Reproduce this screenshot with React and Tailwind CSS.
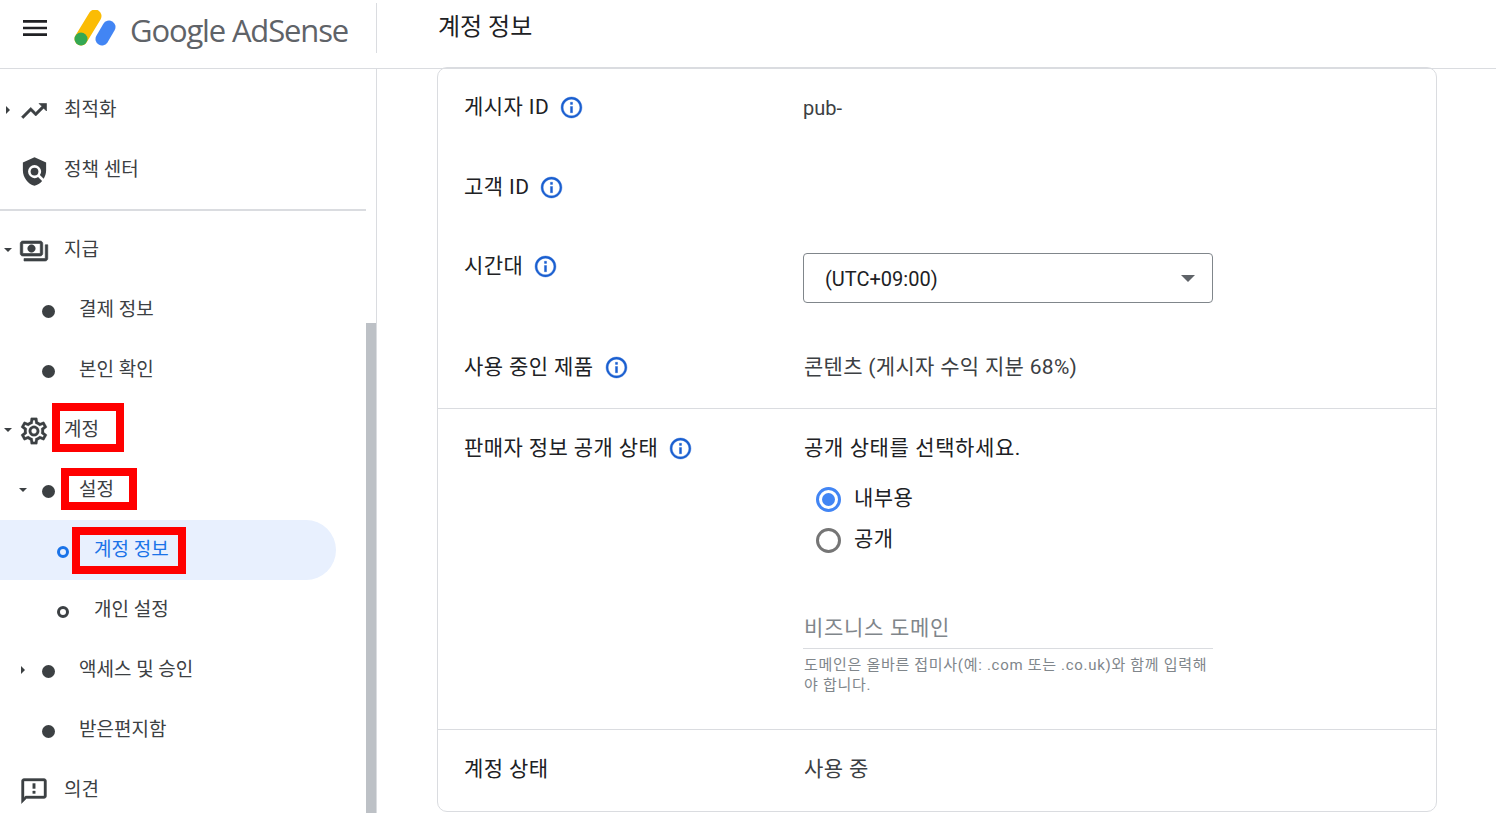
import React from 'react';
import { MdMenu, MdPolicy } from 'react-icons/md';

const fontStack = "font-['Roboto','Noto_Sans_CJK_KR',sans-serif]";
const iconClass = 'mt-[2px] mr-[15px] ml-[5px] shrink-0 text-[#3c4043]';

const paths = {
    trending: 'M16 6l2.29 2.29-4.88 4.88-4-4L2 16.59 3.41 18l6-6 4 4 6.3-6.29L22 12V6z',
    payments: 'M19 14V6c0-1.1-.9-2-2-2H3c-1.1 0-2 .9-2 2v8c0 1.1.9 2 2 2h14c1.1 0 2-.9 2-2zm-2 0H3V6h14v8zm-7-7c-1.66 0-3 1.34-3 3s1.34 3 3 3 3-1.34 3-3-1.34-3-3-3zm13 0v11c0 1.1-.9 2-2 2H4v-2h17V7h2z',
    settings: 'M19.43 12.98c.04-.32.07-.64.07-.98 0-.34-.03-.66-.07-.98l2.11-1.65c.19-.15.24-.42.12-.64l-2-3.46c-.09-.16-.26-.25-.44-.25-.06 0-.12.01-.17.03l-2.49 1c-.52-.4-1.08-.73-1.69-.98l-.38-2.65C14.46 2.18 14.25 2 14 2h-4c-.25 0-.46.18-.49.42l-.38 2.65c-.61.25-1.17.59-1.69.98l-2.49-1c-.06-.02-.12-.03-.18-.03-.17 0-.34.09-.43.25l-2 3.46c-.13.22-.07.49.12.64l2.11 1.65c-.04.32-.07.65-.07.98 0 .33.03.66.07.98l-2.11 1.65c-.19.15-.24.42-.12.64l2 3.46c.09.16.26.25.44.25.06 0 .12-.01.17-.03l2.49-1c.52.4 1.08.73 1.69.98l.38 2.65c.03.24.24.42.49.42h4c.25 0 .46-.18.49-.42l.38-2.65c.61-.25 1.17-.59 1.69-.98l2.49 1c.06.02.12.03.18.03.17 0 .34-.09.43-.25l2-3.46c.12-.22.07-.49-.12-.64l-2.11-1.65zm-1.98-1.71c.04.31.05.52.05.73 0 .21-.02.43-.05.73l-.14 1.13.89.7 1.08.84-.7 1.21-1.27-.51-1.04-.42-.9.68c-.43.32-.84.56-1.25.73l-1.06.43-.16 1.13-.2 1.35h-1.4l-.19-1.35-.16-1.13-1.06-.43c-.43-.18-.83-.41-1.23-.71l-.91-.7-1.06.43-1.27.51-.7-1.21 1.08-.84.89-.7-.14-1.13c-.03-.31-.05-.54-.05-.74s.02-.43.05-.73l.14-1.13-.89-.7-1.08-.84.7-1.21 1.27.51 1.04.42.9-.68c.43-.32.84-.56 1.25-.73l1.06-.43.16-1.13.2-1.35h1.39l.19 1.35.16 1.13 1.06.43c.43.18.83.41 1.23.71l.91.7 1.06-.43 1.27-.51.7 1.21-1.07.85-.89.7.14 1.13zM12 8c-2.21 0-4 1.79-4 4s1.79 4 4 4 4-1.79 4-4-1.79-4-4-4zm0 6c-1.1 0-2-.9-2-2s.9-2 2-2 2 .9 2 2-.9 2-2 2z',
    feedback: 'M20 2H4c-1.1 0-1.99.9-1.99 2L2 22l4-4h14c1.1 0 2-.9 2-2V4c0-1.1-.9-2-2-2zm0 14H5.17L4 17.17V4h16v12zm-9-4h2v2h-2zm0-6h2v4h-2z',
    info: 'M11 7h2v2h-2zm0 4h2v6h-2zm1-9C6.48 2 2 6.48 2 12s4.48 10 10 10 10-4.48 10-10S17.52 2 12 2zm0 18c-4.41 0-8-3.59-8-8s3.59-8 8-8 8 3.59 8 8-3.59 8-8 8z',
};

function Icon({ name, size = 30, weight = 0.5, className = iconClass }) {
    return (
        <svg width={size} height={size} viewBox="0 0 24 24" fill="currentColor" stroke="currentColor" strokeWidth={weight} className={className}>
            <path d={paths[name]} />
        </svg>
    );
}

function Caret({ open }) {
    return (
        <svg width="8" height="8" viewBox="0 0 8 8" className="shrink-0" fill="#3c4043">
            {open ? <path d="M0 2h8L4 6z" /> : <path d="M2 0v8l4-4z" />}
        </svg>
    );
}

function Logo() {
    return (
        <svg width="42" height="36" viewBox="0 0 42 36" className="shrink-0">
            <line x1="7" y1="29" x2="21" y2="6" stroke="#fbbc04" strokeWidth="13" strokeLinecap="round" />
            <line x1="28" y1="29" x2="35" y2="17" stroke="#4285f4" strokeWidth="13" strokeLinecap="round" />
            <circle cx="7" cy="29" r="6.5" fill="#34a853" />
        </svg>
    );
}

function NavRow({ caret, caretClass = 'ml-[2px]', icon, dot, text, active }) {
    return (
        <div className={`flex h-[60px] items-center ${active ? 'mr-[40px] rounded-r-[30px] bg-[#e8f0fe]' : ''}`}>
            <div className={`flex w-[12px] justify-center ${caretClass}`}>{caret !== undefined && <Caret open={caret} />}</div>
            {icon}
            {dot}
            <span className={`-mt-[1px] text-[19px] leading-[24px] ${active ? 'text-[#1a73e8]' : 'text-[#3c4043]'}`}>{text}</span>
        </div>
    );
}

const solidDot = <span className="mt-[3px] ml-[28px] mr-[24px] h-[13px] w-[13px] shrink-0 rounded-full bg-[#3c4043]" />;
const nestedDot = <span className="mt-[3px] ml-[13px] mr-[24px] h-[13px] w-[13px] shrink-0 rounded-full bg-[#3c4043]" />;

function Label({ text, info = true, className = '' }) {
    return (
        <div className={`flex h-[28px] w-[339px] shrink-0 items-center gap-[10px] text-[#202124] ${className}`}>
            <span className="pt-[2px]">{text}</span>
            {info && <Icon name="info" size={25} weight={0.4} className="shrink-0 text-[#1a5fd0]" />}
        </div>
    );
}

function Redbox({ className }) {
    return <div className={`pointer-events-none absolute border-[8px] border-[#ff0000] ${className}`} />;
}

export default function App() {
    return (
        <div className={`relative flex h-[813px] w-[1496px] flex-col overflow-hidden bg-white ${fontStack}`}>
            <header className="flex h-[69px] shrink-0 border-b border-[#dadce0]">
                <div className="flex w-[376px] shrink-0 items-center pb-[12px] pl-[19px]">
                    <MdMenu size={32} className="mr-[23px] shrink-0 text-[#202124]" />
                    <Logo />
                    <span className="ml-[14px] mt-[3px] text-[31px] leading-[40px] text-[#5f6368] font-['Open_Sans',sans-serif] tracking-[-1.15px]">Google AdSense</span>
                </div>
                <div className="mt-[3px] mb-[15px] border-l border-[#dadce0]" />
                <h1 className="ml-[61px] mt-[11px] text-[24px] leading-[32px] font-normal text-[#202124]">계정 정보</h1>
            </header>

            <div className="flex min-h-0 flex-1">
                <aside className="relative w-[377px] shrink-0 border-r border-[#dadce0] pt-[11px]">
                    <NavRow caret={false} text="최적화" icon={<Icon name="trending" />} />
                    <NavRow text="정책 센터" icon={<MdPolicy size={31} className="mt-[2px] mr-[14px] ml-[5px] shrink-0 text-[#3c4043]" />} />
                    <div className="mr-[10px] mt-[9px] mb-[9px] h-[2px] bg-[#dadce0]" />
                    <NavRow caret text="지급" icon={<Icon name="payments" />} />
                    <NavRow text="결제 정보" dot={solidDot} />
                    <NavRow text="본인 확인" dot={solidDot} />
                    <NavRow caret text="계정" icon={<Icon name="settings" size={32} weight={0.15} className="mt-[2px] mr-[14px] ml-[4px] shrink-0 text-[#3c4043]" />} />
                    <NavRow caret caretClass="ml-[17px]" text="설정" dot={nestedDot} />
                    <NavRow active text="계정 정보" dot={<span className="mt-[3px] ml-[43px] mr-[25px] h-[12px] w-[12px] shrink-0 rounded-full border-[3px] border-[#1a73e8]" />} />
                    <NavRow text="개인 설정" dot={<span className="mt-[3px] ml-[43px] mr-[25px] h-[12px] w-[12px] shrink-0 rounded-full border-[3px] border-[#3c4043]" />} />
                    <NavRow caret={false} caretClass="ml-[17px]" text="액세스 및 승인" dot={nestedDot} />
                    <NavRow text="받은편지함" dot={solidDot} />
                    <NavRow text="의견" icon={<Icon name="feedback" weight={0.3} />} />
                    {/* scrollbar thumb */}
                    <div className="absolute right-0 top-[254px] bottom-0 w-[10px] bg-[#bdc1c6]" />
                </aside>

                <main className="min-w-0 flex-1 pl-[60px]">
                    <div className="-mt-[2px] h-[745px] w-[1000px] rounded-[10px] border border-[#dadce0] text-[21px] tracking-[0.4px] text-[#3c4043]">
                        <section className="h-[341px] border-b border-[#dadce0] pl-[26px]">
                            <div className="flex h-[80px] pt-[25px]">
                                <Label text="게시자 ID" />
                                <span className="pt-[1px] text-[20px] leading-[28px] tracking-normal">pub-</span>
                            </div>
                            <div className="flex h-[80px] pt-[25px]">
                                <Label text="고객 ID" />
                            </div>
                            <div className="flex h-[100px] pt-[25px]">
                                <Label text="시간대" className="-mt-[1px]" />
                                <div className="flex h-[50px] w-[410px] items-center justify-between rounded-[4px] border border-[#80868b] pl-[21px] pr-[17px] text-[20px] tracking-normal text-[#202124]">
                                    <span className="pt-[2px]">(UTC+09:00)</span>
                                    <svg width="14" height="7" viewBox="0 0 14 7" fill="#5f6368"><path d="M0 0h14L7 7z" /></svg>
                                </div>
                            </div>
                            <div className="flex h-[80px] pt-[25px]">
                                <Label text="사용 중인 제품" />
                                <span className="pl-[1px] leading-[28px] tracking-[0.3px]">콘텐츠 (게시자 수익 지분 68%)</span>
                            </div>
                        </section>

                        <section className="flex h-[321px] border-b border-[#dadce0] pl-[26px] pt-[25px]">
                            <Label text="판매자 정보 공개 상태" />
                            <div className="w-[410px]">
                                <p className="pl-[1px] leading-[28px] tracking-[0.6px] text-[#202124]">공개 상태를 선택하세요.</p>
                                <div className="mt-[22px] flex h-[40px] items-start pl-[13px]">
                                    <span className="mt-[3px] flex h-[25px] w-[25px] items-center justify-center rounded-full border-[3px] border-[#4285f4]">
                                        <span className="h-[13px] w-[13px] rounded-full bg-[#4285f4]" />
                                    </span>
                                    <span className="ml-[13px] leading-[28px] text-[#202124]">내부용</span>
                                </div>
                                <div className="mt-[1px] flex h-[40px] items-start pl-[13px]">
                                    <span className="mt-[3px] h-[25px] w-[25px] rounded-full border-[3px] border-[#757575]" />
                                    <span className="ml-[13px] leading-[28px] text-[#202124]">공개</span>
                                </div>
                                <div className="mt-[49px] h-[35px] border-b border-[#dadce0] pb-[4px] pl-[1px] leading-[28px] tracking-[0.7px] text-[#80868b]">비즈니스 도메인</div>
                                <p className="mt-[6px] pl-[1px] text-[15px] leading-[20px] tracking-[0.7px] text-[#80868b]">도메인은 올바른 접미사(예: .com 또는 .co.uk)와 함께 입력해야 합니다.</p>
                            </div>
                        </section>

                        <section className="flex pl-[26px] pt-[25px]">
                            <Label text="계정 상태" info={false} />
                            <span className="pl-[1px] leading-[28px]">사용 중</span>
                        </section>
                    </div>
                </main>
            </div>

            <Redbox className="left-[52px] top-[403px] h-[49px] w-[72px]" />
            <Redbox className="left-[61px] top-[468px] h-[42px] w-[76px]" />
            <Redbox className="left-[72px] top-[527px] h-[47px] w-[114px]" />
        </div>
    );
}
